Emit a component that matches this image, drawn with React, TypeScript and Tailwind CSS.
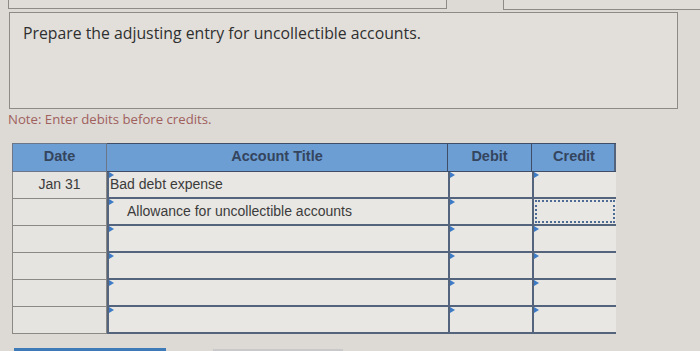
import React from 'react'

const rows = [
  { date: 'Jan 31', title: 'Bad debt expense', indent: false },
  { date: '', title: 'Allowance for uncollectible accounts', indent: true },
  { date: '', title: '', indent: false },
  { date: '', title: '', indent: false },
  { date: '', title: '', indent: false },
  { date: '', title: '', indent: false },
]

const Flag = () => (
  <span className="absolute left-0 top-0 h-0 w-0 border-y-[3px] border-l-[5px] border-y-transparent border-l-[#3d7bc7]" />
)

const InputCell = ({
  children,
  focused = false,
  className = '',
}: {
  children?: React.ReactNode
  focused?: boolean
  className?: string
}) => (
  <div
    className={`relative flex h-[27px] items-center border-b-2 border-l-2 border-[#55647d] bg-[#e9e7e3] ${className}`}
  >
    {!focused && <Flag />}
    {focused && (
      <span className="absolute inset-[1px] border-2 border-dotted border-[#4d6b95]" />
    )}
    {children}
  </div>
)

const App = () => (
  <div className="relative h-[351px] w-[700px] overflow-hidden bg-[#dddad6] font-['Liberation_Sans',Arial,sans-serif]">
    {/* tabs above the prompt box */}
    <div className="flex h-[10px]">
      <div className="ml-[8px] h-[9px] w-[439px] border-x border-b border-[#8e8a86] bg-[#e0ddd9]" />
      <div className="ml-[56px] h-[10px] flex-1 border-l border-b border-[#8e8a86] bg-[#e0ddd9]" />
    </div>

    <div className="ml-[9px] mt-[2px] h-[97px] w-[669px] border border-[#8e8a86] bg-[#e2dfdb] px-[13px] pt-[9px]">
      <p className="font-['Open_Sans',sans-serif] text-[15.8px] text-[#2f2f2f]">
        Prepare the adjusting entry for uncollectible accounts.
      </p>
    </div>

    <p className="ml-[8px] mt-[1px] font-['Open_Sans',sans-serif] text-[13.2px] text-[#a0605c]">
      Note: Enter debits before credits.
    </p>

    <div className="ml-[12px] mt-[13px] w-[604px] border-r-2 border-[#55647d]">
      {/* header */}
      <div className="grid h-[29px] grid-cols-[95px_341px_84px_84px] bg-[#6c9dd3] text-[14.5px] font-bold text-[#34455e]">
        <div className="flex items-center justify-center border border-[#6b7689]">Date</div>
        <div className="flex items-center justify-center border-y border-r border-[#3f4d66]">
          Account Title
        </div>
        <div className="flex items-center justify-center border-y border-r border-[#3f4d66]">
          Debit
        </div>
        <div className="flex items-center justify-center border-y border-[#3f4d66]">Credit</div>
      </div>

      {rows.map((row, i) => (
        <div
          key={i}
          className="grid grid-cols-[95px_341px_84px_84px] text-[14px] text-[#3b3b3b]"
        >
          <div className="flex h-[27px] items-center justify-center border-x border-b border-[#8b8985] bg-[#e6e4e0]">
            {row.date}
          </div>
          <InputCell className={row.indent ? 'pl-[18px]' : 'pl-[1px]'}>{row.title}</InputCell>
          <InputCell />
          <InputCell focused={i === 1} />
        </div>
      ))}
    </div>

    {/* buttons peeking in at the bottom */}
    <div className="absolute bottom-0 left-[14px] h-[3px] w-[152px] bg-[#3e79b8]" />
    <div className="absolute bottom-0 left-[213px] h-[2px] w-[130px] bg-[#c9c9cb]" />
  </div>
)

export default App
